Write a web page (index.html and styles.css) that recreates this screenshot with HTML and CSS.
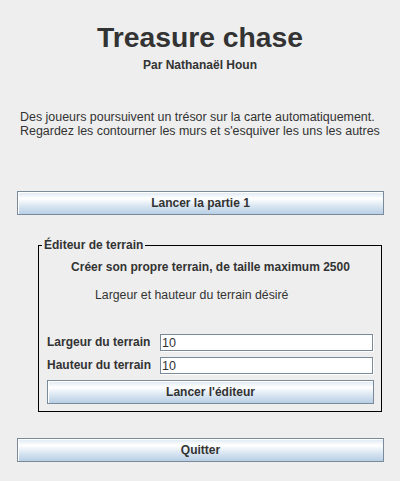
FILE: index.html
```html
<!DOCTYPE html>
<html lang="fr">
<head>
<meta charset="utf-8">
<title>Treasure chase</title>
<link rel="stylesheet" href="styles.css">
</head>
<body>
<main class="app">
  <h1 class="title">Treasure chase</h1>
  <p class="author">Par Nathanaël Houn</p>
  <p class="intro">Des joueurs poursuivent un trésor sur la carte automatiquement.<br>Regardez les contourner les murs et s'esquiver les uns les autres</p>
  <button class="btn btn-wide btn-play" type="button">Lancer la partie 1</button>
  <fieldset class="editor">
    <legend class="editor-title">Éditeur de terrain</legend>
    <div class="editor-body">
      <p class="editor-head">Créer son propre terrain, de taille maximum 2500</p>
      <p class="editor-sub">Largeur et hauteur du terrain désiré</p>
      <div class="form">
        <label class="form-label" for="w">Largeur du terrain</label>
        <input class="field" id="w" type="text" value="10">
        <label class="form-label" for="h">Hauteur du terrain</label>
        <input class="field" id="h" type="text" value="10">
        <button class="btn btn-editor" type="button">Lancer l'éditeur</button>
      </div>
    </div>
  </fieldset>
  <button class="btn btn-wide btn-quit" type="button">Quitter</button>
</main>
</body>
</html>
```

FILE: styles.css
```css
* {
  box-sizing: border-box;
}

body {
  margin: 0;
  background: #eeeeee;
  color: #333333;
  font-family: "Liberation Sans", Arial, sans-serif;
}

.app {
  display: flex;
  flex-direction: column;
}

.title {
  margin: 21px 0 0;
  font-size: 28.3px;
  line-height: 32px;
  font-weight: bold;
  text-align: center;
}

.author {
  margin: 5px 0 0;
  font-size: 12px;
  line-height: 14px;
  font-weight: bold;
  text-align: center;
}

.intro {
  margin: 38px 0 0;
  padding-left: 20px;
  font-size: 12.45px;
  line-height: 14px;
}

.btn {
  display: block;
  height: 24px;
  padding: 0;
  border: 1px solid #7a8a99;
  background: linear-gradient(#dde8f3 0%, #ffffff 30%, #dde8f3 60%, #b8cfe5 100%);
  box-shadow: inset 1px 1px 0 #ffffff;
  font-family: "Liberation Sans", Arial, sans-serif;
  font-size: 12px;
  line-height: 22px;
  font-weight: bold;
  color: #333333;
  text-align: center;
}

.btn-wide {
  margin-left: 17px;
  margin-right: 16px;
}

.btn-play {
  margin-top: 53px;
}

.btn-quit {
  margin-top: 26px;
}

.editor {
  margin: 23px 18px 0 38px;
  padding: 0 0 0 3px;
  border: 1px solid #000000;
  min-width: 0;
}

.editor-title {
  padding: 0 2px;
  font-size: 12px;
  line-height: 15px;
  font-weight: bold;
}

.editor-body {
  display: flex;
  flex-direction: column;
  padding: 7px 7px 7px 5px;
}

.editor-head {
  margin: 0;
  font-size: 12px;
  line-height: 14px;
  font-weight: bold;
  text-align: center;
}

.editor-sub {
  margin: 14px 0 0;
  padding-left: 48px;
  font-size: 12.3px;
  line-height: 14px;
}

.form {
  display: grid;
  grid-template-columns: 113px 1fr;
  row-gap: 6px;
  margin-top: 32px;
}

.form-label {
  font-size: 12px;
  line-height: 17px;
  font-weight: bold;
}

.field {
  height: 17px;
  margin: 0 1px 0 0;
  padding: 0 1px;
  border: 1px solid #7a8a99;
  background: #ffffff;
  box-shadow: 1px 1px 0 #ffffff;
  font-family: "Liberation Sans", Arial, sans-serif;
  font-size: 12.5px;
  line-height: 15px;
  color: #333333;
  outline: none;
}

.btn-editor {
  grid-column: 1 / -1;
  width: 100%;
}
```
